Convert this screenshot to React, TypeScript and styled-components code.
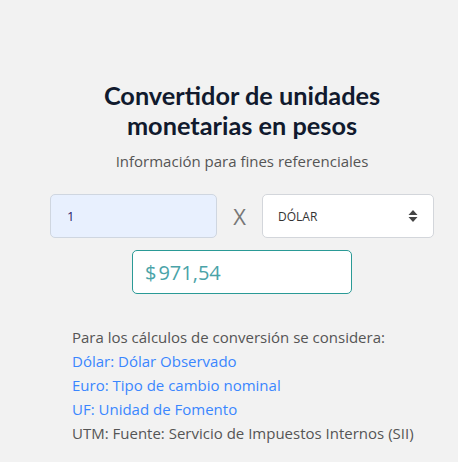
import React, { useState } from 'react';
import styled, { createGlobalStyle } from 'styled-components';

const GlobalStyle = createGlobalStyle`
  html, body {
    margin: 0;
    padding: 0;
    background: #f2f2f2;
  }
  * { box-sizing: border-box; }
`;

const Page = styled.div`
  width: 458px;
  min-height: 462px;
  padding: 80px 24px 0 50px;
  display: flex;
  flex-direction: column;
  align-items: center;
`;

const Title = styled.h1`
  margin: 0;
  font-family: Lato, "Open Sans", sans-serif;
  font-weight: 700;
  font-size: 25.3px;
  line-height: 30px;
  color: #111a2e;
  text-align: center;
`;

const Subtitle = styled.p`
  margin: 10px 0 0;
  font-family: "Open Sans", sans-serif;
  font-size: 15px;
  line-height: 22px;
  color: #555;
  text-align: center;
`;

const Row = styled.div`
  margin-top: 22px;
  width: 100%;
  display: grid;
  grid-template-columns: 167px 1fr 172px;
  align-items: center;
`;

const AmountInput = styled.input`
  height: 44px;
  width: 100%;
  padding: 0 16px;
  border: 1px solid #cfd6e0;
  border-radius: 5px;
  background: #e8f0fe;
  font-family: "Open Sans", sans-serif;
  font-size: 13px;
  color: #2a1a6a;
  outline: none;
`;

const Times = styled.span`
  text-align: center;
  font-family: "Open Sans", sans-serif;
  font-size: 22px;
  color: #777;
`;

const SelectWrap = styled.div`
  position: relative;
  height: 44px;
`;

const CurrencySelect = styled.select`
  appearance: none;
  width: 100%;
  height: 100%;
  padding: 0 36px 0 15px;
  border: 1px solid #d3d6db;
  border-radius: 5px;
  background: #fff;
  font-family: "Open Sans", sans-serif;
  font-size: 12px;
  color: #333;
  outline: none;
`;

const Arrows = styled.svg`
  position: absolute;
  right: 16px;
  top: 50%;
  transform: translateY(-50%);
  pointer-events: none;
`;

const Result = styled.div`
  margin-top: 12px;
  width: 220px;
  height: 44px;
  display: flex;
  align-items: center;
  padding: 0 12px;
  border: 1px solid #2a9a96;
  border-radius: 5px;
  background: #fff;
  font-family: "Open Sans", sans-serif;
  font-size: 20px;
  color: #4aa3a8;
`;

const Currency = styled.span`
  margin-right: 2px;
`;

const Notes = styled.div`
  margin-top: 31px;
  align-self: flex-start;
  padding-left: 22px;
  font-family: "Open Sans", sans-serif;
  font-size: 15px;
  line-height: 24px;
  color: #555;
`;

const Line = styled.div<{ $link?: boolean }>`
  color: ${p => (p.$link ? '#3a86ff' : '#555')};
`;

const rates: Record<string, number> = {
  DOLAR: 971.54,
  EURO: 1045.2,
  UF: 37000,
  UTM: 65000,
};

const labels: Record<string, string> = {
  DOLAR: 'DÓLAR',
  EURO: 'EURO',
  UF: 'UF',
  UTM: 'UTM',
};

export default function App() {
  const [amount, setAmount] = useState('1');
  const [currency, setCurrency] = useState('DOLAR');
  const value = (parseFloat(amount) || 0) * rates[currency];
  const formatted = value.toLocaleString('es-CL', { minimumFractionDigits: 2, maximumFractionDigits: 2 });

  return (
    <>
      <GlobalStyle />
      <Page>
        <Title>
          Convertidor de unidades
          <br />
          monetarias en pesos
        </Title>
        <Subtitle>Información para fines referenciales</Subtitle>
        <Row>
          <AmountInput value={amount} onChange={e => setAmount(e.target.value)} />
          <Times>X</Times>
          <SelectWrap>
            <CurrencySelect value={currency} onChange={e => setCurrency(e.target.value)}>
              {Object.keys(labels).map(k => (
                <option key={k} value={k}>{labels[k]}</option>
              ))}
            </CurrencySelect>
            <Arrows width="10" height="14" viewBox="0 0 10 14">
              <path d="M5 1 L9.5 6 H0.5 Z" fill="#444" />
              <path d="M5 13 L9.5 8 H0.5 Z" fill="#444" />
            </Arrows>
          </SelectWrap>
        </Row>
        <Result>
          <Currency>$</Currency>
          {formatted}
        </Result>
        <Notes>
          <Line>Para los cálculos de conversión se considera:</Line>
          <Line $link>Dólar: Dólar Observado</Line>
          <Line $link>Euro: Tipo de cambio nominal</Line>
          <Line $link>UF: Unidad de Fomento</Line>
          <Line>UTM: Fuente: Servicio de Impuestos Internos (SII)</Line>
        </Notes>
      </Page>
    </>
  );
}
